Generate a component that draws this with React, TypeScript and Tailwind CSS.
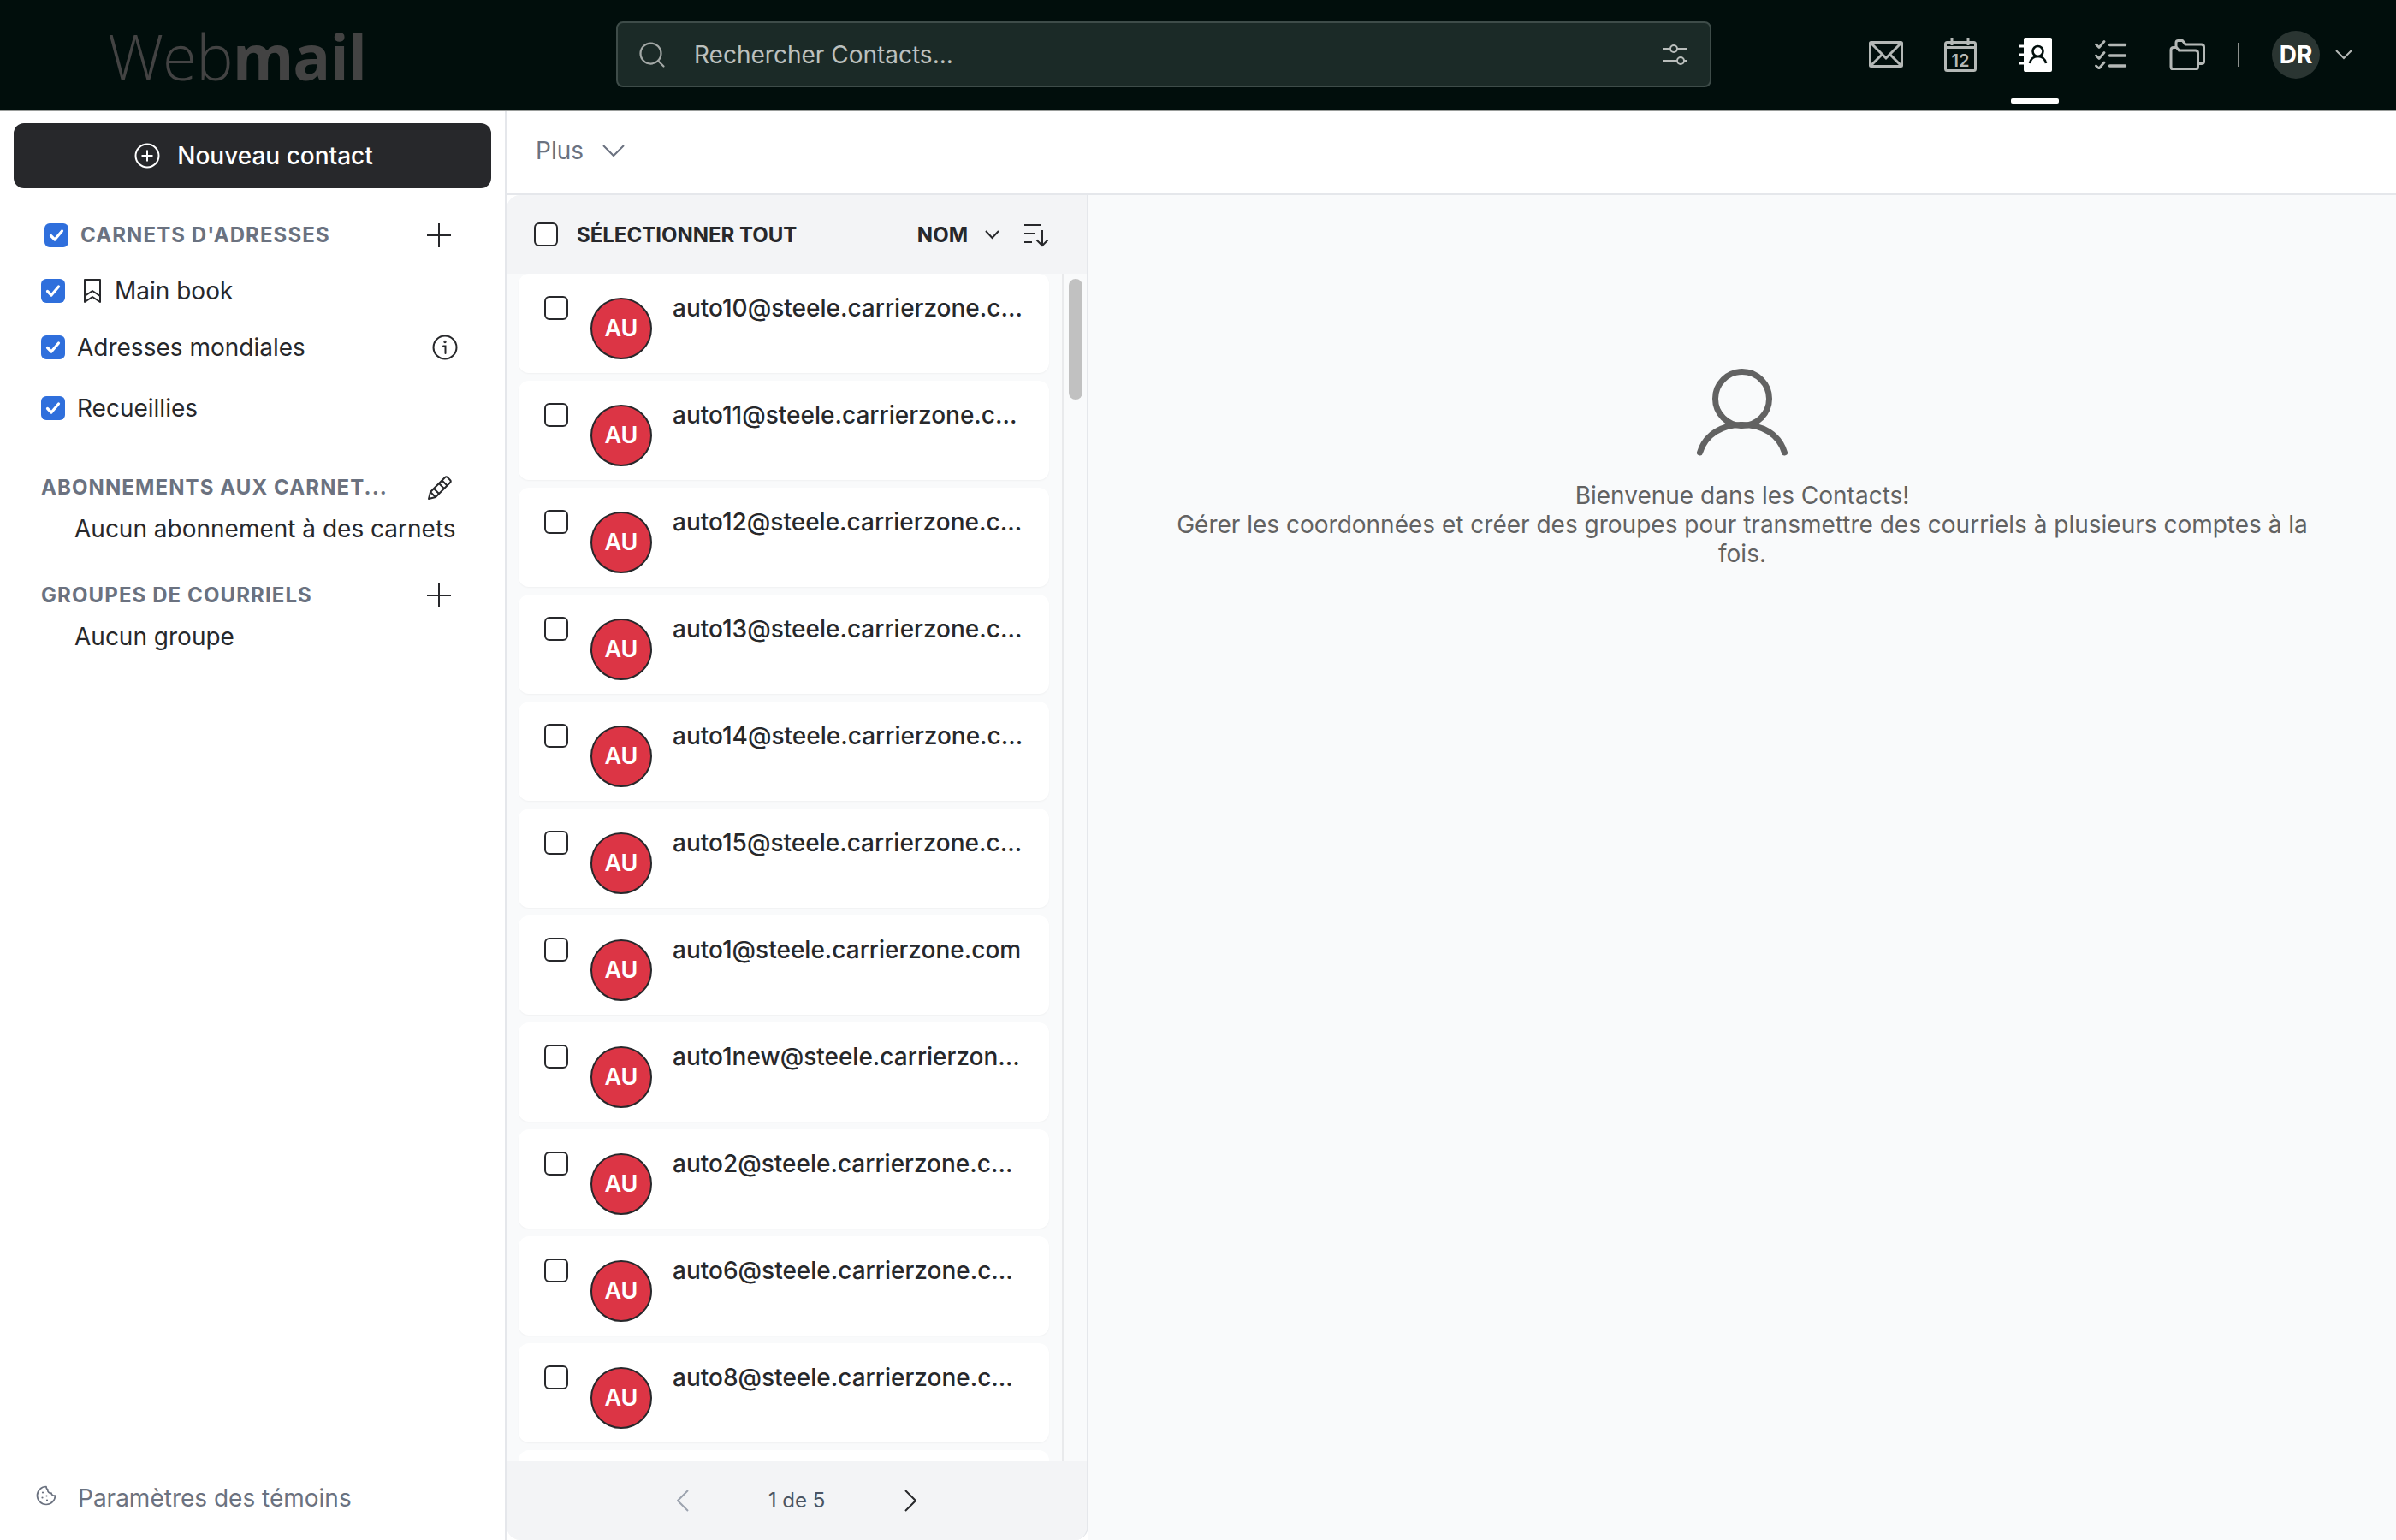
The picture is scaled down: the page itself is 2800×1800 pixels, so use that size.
import { Search } from 'lucide-react';

const emails = [
  'auto10@steele.carrierzone.com',
  'auto11@steele.carrierzone.com',
  'auto12@steele.carrierzone.com',
  'auto13@steele.carrierzone.com',
  'auto14@steele.carrierzone.com',
  'auto15@steele.carrierzone.com',
  'auto1@steele.carrierzone.com',
  'auto1new@steele.carrierzone.com',
  'auto2@steele.carrierzone.com',
  'auto6@steele.carrierzone.com',
  'auto8@steele.carrierzone.com',
];

function Checked({ className = '' }: { className?: string }) {
  return (
    <span className={`flex h-[28px] w-[28px] shrink-0 items-center justify-center rounded-[6px] bg-[#2f6fdc] ${className}`}>
      <svg width="20" height="20" viewBox="0 0 20 20" fill="none" stroke="white" strokeWidth="3.2" strokeLinecap="round" strokeLinejoin="round">
        <path d="M3.5 10.5l4.5 4.5 8.5-10" />
      </svg>
    </span>
  );
}

function Unchecked() {
  return <span className="block h-[28px] w-[28px] shrink-0 rounded-[6px] border-2 border-[#27282b] bg-white" />;
}

function Chevron({ width, color = '#6b7280' }: { width: number; color?: string }) {
  const h = Math.round(width / 2) + 2;
  return (
    <svg width={width} height={h} viewBox={`0 0 ${width} ${h}`} fill="none" stroke={color} strokeWidth="2">
      <path d={`M1 1L${width / 2} ${h - 2}L${width - 1} 1`} />
    </svg>
  );
}

function PageArrow({ left, color }: { left?: boolean; color: string }) {
  return (
    <svg width="14" height="26" viewBox="0 0 14 26" fill="none" stroke={color} strokeWidth="2">
      <path d={left ? 'M13 1L1 13l12 12' : 'M1 1l12 12L1 25'} />
    </svg>
  );
}

function PlusIcon() {
  return (
    <svg width="28" height="28" viewBox="0 0 28 28" fill="none" stroke="#27282b" strokeWidth="2">
      <path d="M14 0v28M0 14h28" />
    </svg>
  );
}

function MailIcon() {
  return (
    <svg width="40" height="32" viewBox="0 0 40 32" fill="none" stroke="#b4b8b6" strokeWidth="3">
      <rect x="1.5" y="1.5" width="37" height="28" rx="1" />
      <path d="M2 2l18 18L38 2M2 29l14-14M38 29L24 15" />
    </svg>
  );
}

function CalendarIcon() {
  return (
    <svg width="38" height="40" viewBox="0 0 38 40" fill="none" stroke="#b4b8b6" strokeWidth="3">
      <rect x="1.5" y="5.5" width="35" height="33" rx="2" />
      <path d="M1.5 11.500h35M9 0v9M28 0v9" />
      <text x="19" y="34" textAnchor="middle" fill="#b4b8b6" stroke="none" fontSize="20" fontWeight="600" fontFamily="Inter, sans-serif">12</text>
    </svg>
  );
}

function ContactsIcon() {
  return (
    <svg width="38" height="42" viewBox="0 0 38 42" fill="none">
      <rect x="5" y="1" width="33" height="40" rx="2" fill="white" />
      <path d="M0 11h6M0 21h6M0 31h6" stroke="white" strokeWidth="3" />
      <circle cx="21.5" cy="17" r="6" stroke="#010e0c" strokeWidth="2.6" />
      <path d="M12 31c1-5 5-8 9.500-8s8.500 3 9.500 8" stroke="#010e0c" strokeWidth="2.600" />
    </svg>
  );
}

function TasksIcon() {
  return (
    <svg width="38" height="34" viewBox="0 0 38 34" fill="none" stroke="#b4b8b6" strokeLinecap="round">
      <g strokeWidth="2.800" strokeLinejoin="round">
        <path d="M1.500 5l3.500 3.500L11 1.500M1.500 18l3.500 3.500L11 14.500M1.500 30l3.500 3 6-7" />
      </g>
      <path d="M17.500 5.500h18M17.500 18h18M17.500 30h18" strokeWidth="3.400" />
    </svg>
  );
}

function FilesIcon() {
  return (
    <svg width="42" height="36" viewBox="0 0 42 36" fill="none" stroke="#b4b8b6" strokeWidth="3" strokeLinejoin="round">
      <path d="M2 12.500C2 10.500 3 9.500 5 9.500h3.500l3 3.500h19c2 0 3 1 3 3v16c0 2-1 3-3 3H5c-2 0-3-1-3-3z" />
      <path d="M8 9V4c0-1.500 1-2.500 2.500-2.500h5l3.500 4.500h18.500c2 0 3 1 3 3v17c0 1.500-1 2.500-3 2.500h-4" />
    </svg>
  );
}

function SlidersIcon() {
  return (
    <svg width="30" height="26" viewBox="0 0 30 26" fill="none" stroke="#b9bdbb" strokeWidth="2">
      <path d="M1 6h9M18 6h11M1 20h17M26 20h3" />
      <circle cx="14" cy="6" r="4" />
      <circle cx="22" cy="20" r="4" />
    </svg>
  );
}

function PlusCircle() {
  return (
    <svg width="30" height="30" viewBox="0 0 30 30" fill="none" stroke="white" strokeWidth="2">
      <circle cx="15" cy="15" r="13.500" />
      <path d="M15 8.500v13M8.500 15h13" />
    </svg>
  );
}

function BookmarkIcon() {
  return (
    <svg width="22" height="30" viewBox="0 0 22 30" fill="none" stroke="#27282b" strokeWidth="2" strokeLinejoin="round">
      <path d="M2 2h18v26l-9-6-9 6z" />
      <path d="M2 21l9-6 9 6" />
    </svg>
  );
}

function InfoIcon() {
  return (
    <svg width="30" height="30" viewBox="0 0 30 30" fill="none" stroke="#27282b" strokeWidth="2" strokeLinecap="round">
      <circle cx="15" cy="15" r="13.500" />
      <path d="M13 13.500h2.500V22" />
      <circle cx="15" cy="8.500" r="0.700" />
    </svg>
  );
}

function PencilIcon() {
  return (
    <svg width="30" height="30" viewBox="0 0 30 30" fill="none" stroke="#27282b" strokeWidth="2" strokeLinejoin="round">
      <path d="M2 28l2-8L21 3c1-1 2-1 3 0l3 3c1 1 1 2 0 3L10 26z" />
      <path d="M17.500 6.500l6 6M14 10l6 6M4 20l6 6M8 16l6 6" />
    </svg>
  );
}

function SortIcon() {
  return (
    <svg width="30" height="30" viewBox="0 0 30 30" fill="none" stroke="#27282b" strokeWidth="2">
      <path d="M1 4h20M1 14h13M1 24h9M22 10v18M15.500 21.500l6.500 6.500 6.500-6.500" />
    </svg>
  );
}

function CookieIcon() {
  return (
    <svg width="24" height="24" viewBox="0 0 24 24" fill="none" stroke="#6b7280" strokeWidth="1.700" strokeLinecap="round" strokeLinejoin="round">
      <path d="M12 1.500a10.500 10.500 0 1 0 10.500 10.500c-2.500.5-4.500-1-4.500-3-2.500.5-5-1.500-4-4-1.500-.5-2-2-2-3.500z" />
      <path d="M8 8.500h.01M7.500 14.500h.01M12.500 12.500h.01M13 17.500h.01" strokeWidth="2.200" />
    </svg>
  );
}

function PersonIcon() {
  return (
    <svg width="106" height="102" viewBox="0 0 106 102" fill="none" stroke="#626262" strokeWidth="7" strokeLinecap="round">
      <circle cx="53" cy="35" r="31.500" />
      <path d="M3.500 98C10 76 30 65.500 53 65.500S96 76 102.500 98" />
    </svg>
  );
}

function ContactCard({ email }: { email: string }) {
  return (
    <div className="flex h-[116px] shrink-0 rounded-[12px] bg-white pl-[30px] pt-[26px] shadow-[0_1px_2px_rgba(0,0,0,0.04)]">
      <Unchecked />
      <div className="ml-[26px] mt-[2px] flex h-[72px] w-[72px] shrink-0 items-center justify-center rounded-full border-2 border-[#27282b] bg-[#dc3545] text-[27px] font-semibold text-white">
        AU
      </div>
      <div className="ml-[24px] w-[410px] truncate text-[28px] leading-[28px] font-medium text-[#27282b]">{email}</div>
    </div>
  );
}

export default function App() {
  return (
    <div className="flex h-[1800px] w-[2800px] flex-col overflow-hidden bg-white font-['Inter',sans-serif] text-[28px] text-[#27282b]">
      <header className="flex h-[130px] shrink-0 items-start border-b-2 border-[#9a9d9b] bg-[#010e0c]">
        <div className="mt-[16px] ml-[126px] w-[594px] text-[73px] leading-[100px] tracking-[-1px] text-[#434343] font-['Open_Sans',sans-serif]">
          <span className="font-light">Web</span>
          <span className="font-bold">mail</span>
        </div>
        <div className="mt-[25px] flex h-[77px] w-[1280px] items-center rounded-[8px] border-2 border-[#3e4c49] bg-[#1b2a27] pr-[26px] pl-[22px]">
          <Search size={36} strokeWidth={1.500} className="text-[#a3a8a6]" />
          <span className="ml-[31px] flex-1 text-[#bcc0be]">Rechercher Contacts...</span>
          <SlidersIcon />
        </div>
        <nav className="ml-[184px] flex h-[128px] items-center">
          <div className="mr-[48px]"><MailIcon /></div>
          <div className="mr-[50px]"><CalendarIcon /></div>
          <div className="relative mr-[50px]">
            <ContactsIcon />
            <span className="absolute top-[72px] -left-[10px] h-[6px] w-[56px] rounded-[2px] bg-white" />
          </div>
          <div className="mr-[49px]"><TasksIcon /></div>
          <FilesIcon />
          <span className="mx-[38px] h-[28px] w-[2px] bg-[#8c908e]" />
          <div className="flex h-[56px] w-[56px] items-center justify-center rounded-full bg-[#2a3532] font-bold text-white">DR</div>
          <span className="ml-[18px]"><Chevron width={20} color="#b4b8b6" /></span>
        </nav>
      </header>

      <div className="flex min-h-0 flex-1">
        <aside className="flex w-[592px] shrink-0 flex-col border-r-2 border-[#e5e7eb] pt-[14px]">
          <button className="mx-[16px] flex h-[76px] w-[558px] items-center justify-center gap-[20px] rounded-[12px] bg-[#27282b] pl-[3px] font-medium text-white">
            <PlusCircle />
            Nouveau contact
          </button>

          <div className="mt-[41px] ml-[52px] flex h-[28px] items-center">
            <Checked />
            <span className="ml-[14px] w-[405px] text-[24px] font-bold tracking-[1.1px] text-[#6b7280]">CARNETS D'ADRESSES</span>
            <PlusIcon />
          </div>

          <div className="mt-[37px] ml-[48px] flex h-[28px] items-center">
            <Checked />
            <span className="ml-[21px]"><BookmarkIcon /></span>
            <span className="ml-[15px]">Main book</span>
          </div>
          <div className="mt-[38px] ml-[48px] flex h-[28px] items-center">
            <Checked />
            <span className="ml-[14px] w-[415px]">Adresses mondiales</span>
            <InfoIcon />
          </div>
          <div className="mt-[43px] ml-[48px] flex h-[28px] items-center">
            <Checked />
            <span className="ml-[14px]">Recueillies</span>
          </div>

          <div className="mt-[65px] ml-[48px] flex h-[28px] items-center">
            <span className="w-[451px] text-[24px] font-bold tracking-[1.1px] text-[#6b7280]">ABONNEMENTS AUX CARNET...</span>
            <PencilIcon />
          </div>
          <div className="mt-[16px] ml-[87px] h-[36px] leading-[36px]">Aucun abonnement à des carnets</div>
          <div className="mt-[46px] ml-[48px] flex h-[28px] items-center">
            <span className="w-[451px] text-[24px] font-bold tracking-[1.1px] text-[#6b7280]">GROUPES DE COURRIELS</span>
            <PlusIcon />
          </div>
          <div className="mt-[16px] ml-[87px] h-[36px] leading-[36px]">Aucun groupe</div>

          <div className="mt-auto mb-[28px] ml-[42px] flex items-center">
            <span className="-mt-[6px]"><CookieIcon /></span>
            <span className="ml-[25px] text-[#6b7280]">Paramètres des témoins</span>
          </div>
        </aside>

        <main className="flex min-w-0 flex-1 flex-col">
          <div className="flex h-[98px] shrink-0 items-center border-b-[2px] border-[#e5e7eb] pb-[4px] pl-[34px]">
            <span className="text-[#6b7280]">Plus</span>
            <span className="ml-[22px]"><Chevron width={26} /></span>
          </div>

          <div className="flex min-h-0 flex-1">
            <section className="flex w-[680px] shrink-0 flex-col overflow-hidden rounded-tl-[16px] rounded-b-[16px] border-r-[2px] border-[#e5e7eb] bg-[#f9fafb]">
              <div className="flex h-[92px] shrink-0 items-center bg-[#f3f4f6] pr-[44px] pl-[32px]">
                <Unchecked />
                <span className="ml-[22px] flex-1 pt-[1px] text-[24px] font-bold">SÉLECTIONNER TOUT</span>
                <span className="pt-[1px] text-[24px] font-bold">NOM</span>
                <span className="mr-[28px] ml-[20px]"><Chevron width={17} color="#27282b" /></span>
                <SortIcon />
              </div>

              <div className="flex min-h-0 flex-1">
                <div className="flex min-w-0 flex-1 flex-col gap-[9px] overflow-hidden pr-[15px] pl-[14px]">
                  {emails.map((email) => (
                    <ContactCard key={email} email={email} />
                  ))}
                  <div className="h-[116px] shrink-0 rounded-[12px] bg-white" />
                </div>
                <div className="w-[29px] shrink-0 border-l-2 border-[#e9eaec] pt-[6px] pl-[6px]">
                  <div className="h-[141px] w-[16px] rounded-full bg-[#c1c1c1]" />
                </div>
              </div>

              <div className="flex h-[92px] shrink-0 items-center justify-center bg-[#f3f4f6] text-[24px] text-[#4b5563]">
                <PageArrow left color="#9ca3af" />
                <span className="mx-[93px]">1 de 5</span>
                <PageArrow color="#27282b" />
              </div>
            </section>

            <div className="flex min-w-0 flex-1 flex-col items-center bg-[#f9fafb] px-[96px] pt-[203px] text-center leading-[34px] text-[#626262]">
              <PersonIcon />
              <div className="mt-[29px]">Bienvenue dans les Contacts!</div>
              <div>Gérer les coordonnées et créer des groupes pour transmettre des courriels à plusieurs comptes à la fois.</div>
            </div>
          </div>
        </main>
      </div>
    </div>
  );
}
